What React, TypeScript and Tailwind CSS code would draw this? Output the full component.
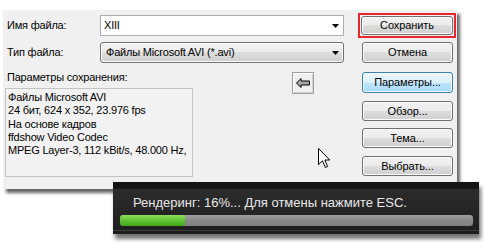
import React from "react";

const btn =
  "flex items-center justify-center rounded-[3px] border border-[#707070] bg-[linear-gradient(to_bottom,#f2f2f2_0%,#ebebeb_50%,#dddddd_50%,#cfcfcf_100%)] shadow-[inset_0_0_0_1px_#fbfbfb] text-[11px] tracking-[-0.1px] text-black leading-none";

function Arrow() {
  return (
    <svg width="7" height="4" viewBox="0 0 7 4">
      <path d="M0 0 L7 0 L3.5 4 Z" fill="#000" />
    </svg>
  );
}

export default function App() {
  return (
    <div
      className="relative w-[484px] h-[250px] overflow-hidden bg-white text-black"
      style={{ fontFamily: '"Liberation Sans", Arial, sans-serif' }}
    >
      <div className="ml-[3px] mt-[10px] w-[454px] h-[179px] bg-[#f0f0f0] flex shadow-[3px_4px_3px_rgba(0,0,0,0.6)] text-[11px] tracking-[-0.2px]">
        {/* left column */}
        <div className="w-[346px] flex flex-col pt-[5px]">
          <div className="flex items-center h-[21px]">
            <div className="w-[97px] pl-[4px]">Имя файла:</div>
            <div className="w-[244px] h-[21px] bg-white border border-[#abadb3] flex items-center pl-[3px] pr-[4px]">
              <span className="flex-1">XIII</span>
              <Arrow />
            </div>
          </div>
          <div className="flex items-center h-[21px] mt-[6px]">
            <div className="w-[97px] pl-[4px]">Тип файла:</div>
            <div className="w-[244px] h-[21px] rounded-[3px] border border-[#707070] bg-[linear-gradient(to_bottom,#f2f2f2_0%,#ebebeb_50%,#dddddd_50%,#cfcfcf_100%)] shadow-[inset_0_0_0_1px_#fbfbfb] flex items-center pl-[5px] pr-[4px]">
              <span className="flex-1">Файлы Microsoft AVI (*.avi)</span>
              <Arrow />
            </div>
          </div>
          <div className="flex mt-[7px]">
            <div className="w-[190px] flex flex-col">
              <div className="pl-[4px] h-[18px] leading-[14px]">Параметры сохранения:</div>
              <div className="ml-[2px] w-[188px] h-[89px] border border-[#c4c4c4] bg-[#f2f2f2] pl-[2px] pt-[2px] leading-[13.3px]">
                <div>Файлы Microsoft AVI</div>
                <div>24 бит, 624 x 352, 23.976 fps</div>
                <div>На основе кадров</div>
                <div>ffdshow Video Codec</div>
                <div>MPEG Layer-3, 112 kBit/s, 48.000 Hz,</div>
              </div>
            </div>
            <div className="ml-[99px] mt-[2px] w-[22px] h-[22px] border border-[#a0a0a0] bg-[#f0f0f0] shadow-[inset_1px_1px_0_#ffffff,inset_-1px_-1px_0_#d0d0d0] flex items-center justify-center">
              <svg width="14" height="10" viewBox="0 0 14 10">
                <path
                  d="M0.5 5 L5 0.5 L5 3 L13.5 3 L13.5 7 L5 7 L5 9.5 Z"
                  fill="#a8a8a8"
                  stroke="#000"
                  strokeWidth="1"
                  strokeLinejoin="miter"
                />
              </svg>
            </div>
          </div>
        </div>
        {/* right column */}
        <div className="flex flex-col w-[108px]">
          <div className="ml-[9px] mt-[3px] w-[98px] h-[25px] border-2 border-[#e8262b] p-[1px]">
            <div className={`${btn} w-full h-full`}>Сохранить</div>
          </div>
          <div className={`${btn} ml-[13px] mt-[4px] w-[91px] h-[21px]`}>Отмена</div>
          <div className="ml-[13px] mt-[9px] w-[91px] h-[21px] flex items-center justify-center rounded-[3px] border border-[#3c7fb1] bg-[linear-gradient(to_bottom,#eaf6fd_0%,#d9f0fc_50%,#bee6fd_50%,#a7d9f5_100%)] shadow-[inset_0_0_0_1px_#f4fbff] text-[11px] tracking-[-0.1px] leading-none">
            Параметры...
          </div>
          <div className={`${btn} ml-[13px] mt-[8px] w-[91px] h-[20px]`}>Обзор...</div>
          <div className={`${btn} ml-[13px] mt-[7px] w-[91px] h-[20px]`}>Тема...</div>
          <div className={`${btn} ml-[13px] mt-[8px] w-[91px] h-[20px]`}>Выбрать...</div>
        </div>
      </div>

      {/* mouse cursor */}
      <svg className="absolute left-[318px] top-[148px]" width="13" height="21" viewBox="0 0 13 21">
        <path
          d="M0.5 0.5 L0.5 16.5 L4.5 12.8 L7.3 19.5 L9.6 18.5 L6.9 12 L11.8 12 Z"
          fill="#fff"
          stroke="#000"
          strokeWidth="1"
          strokeLinejoin="miter"
        />
      </svg>

      {/* rendering overlay */}
      <div className="absolute left-[113px] top-[182px] w-[366px] h-[52px] bg-[linear-gradient(to_bottom,#141414_0%,#141414_12%,#2c2c2c_14%,#232323_70%,#1c1c1c_100%)] shadow-[2px_5px_4px_rgba(0,0,0,0.55)] flex flex-col">
        <div className="pl-[20px] pt-[13px] h-[31px] text-[13px] leading-[16px] text-[#e8e8e8]">
          Рендеринг: 16%... Для отмены нажмите ESC.
        </div>
        <div className="ml-[7px] mt-[2px] w-[353px] h-[11px] rounded-[3px] bg-[linear-gradient(to_bottom,#a0a0a0_0%,#8a8a8a_50%,#7e7e7e_100%)] overflow-hidden">
          <div
            className="h-full rounded-[3px] bg-[linear-gradient(to_bottom,#8fdc5c_0%,#5fc232_50%,#3ea61a_100%)]"
            style={{ width: 65 }}
          />
        </div>
        <div className="mt-[4px] h-[1px] bg-[#3a3a3a]" />
      </div>
    </div>
  );
}
